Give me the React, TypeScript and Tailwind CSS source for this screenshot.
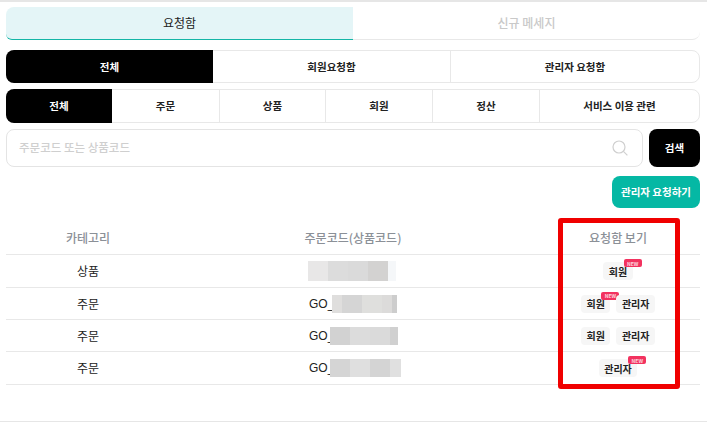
const font = { fontFamily: '"Noto Sans CJK KR", "Noto Sans", sans-serif' };

const typeTabs = ['전체', '회원요청함', '관리자 요청함'];
const categoryTabs = [
  { label: '전체', width: 'w-[106px]' },
  { label: '주문', width: 'w-[108px]' },
  { label: '상품', width: 'w-[106px]' },
  { label: '회원', width: 'w-[107px]' },
  { label: '정산', width: 'w-[107px]' },
  { label: '서비스 이용 관련', width: 'flex-1' },
];

// 블러 처리된 코드 영역
const rows = [
  {
    category: '상품',
    prefix: '',
    height: 'h-[33px]',
    blurBox: 'h-[20px] -ml-[1px]',
    blur: ['#e8e7e7', '#dcdcdc', '#dadada', '#d3d2d1', '#f5f7f9'],
    widths: ['w-[20px]', 'w-[20px]', 'w-[20px]', 'w-[20px]', 'w-[8px]'],
    tags: [{ label: '회원', isNew: true }],
  },
  {
    category: '주문',
    prefix: 'GO_',
    height: 'h-[32px]',
    blurBox: 'h-[18px] -ml-[2px]',
    blur: ['#dfdedd', '#d5d5d5', '#dfdfdd', '#dcdbda', '#cdcdcd'],
    widths: ['w-[10px]', 'w-[20px]', 'w-[20px]', 'w-[10px]', 'w-[5px]'],
    tags: [{ label: '회원', isNew: true }, { label: '관리자' }],
  },
  {
    category: '주문',
    prefix: 'GO_',
    height: 'h-[32px]',
    blurBox: 'h-[18px] -ml-[4px]',
    blur: ['#d2d2d2', '#dcdcdc', '#dadada', '#d0d0d0'],
    widths: ['w-[20px]', 'w-[20px]', 'w-[20px]', 'w-[8px]'],
    tags: [{ label: '회원' }, { label: '관리자' }],
  },
  {
    category: '주문',
    prefix: 'GO_',
    height: 'h-[33px]',
    blurBox: 'h-[18px] -ml-[4px]',
    blur: ['#d5d5d5', '#dfdfdf', '#d4d4d4', '#e0e0e0'],
    widths: ['w-[20px]', 'w-[20px]', 'w-[20px]', 'w-[11px]'],
    tags: [{ label: '관리자', isNew: true }],
  },
];

const Tag = ({ label, isNew }: { label: string; isNew?: boolean }) => (
  <span className="relative flex h-[18px] items-center rounded-[4px] bg-[#f6f6f6] px-[5.5px] text-[10px] font-bold text-[#222]">
    {label}
    {isNew && (
      <span className="absolute -right-[9px] -top-[3px] flex h-[8px] w-[18px] items-center justify-center rounded-[2px] bg-[#f2325f] text-[5px] leading-none text-white/80">
        NEW
      </span>
    )}
  </span>
);

export default function App() {
  return (
    <div style={font} className="relative h-[432px] w-[707px] overflow-hidden border-t-2 border-[#e6e6e6] bg-white">
      <div className="pl-[6px] pr-[7px] pt-[5px]">
        {/* 상단 탭 */}
        <div className="flex h-[33px] text-[12px]">
          <div className="flex flex-1 items-center justify-center rounded-tl-[8px] rounded-bl-[6px] border-b border-[#14b5a6] bg-[#e4f5f7] text-[#222]">
            요청함
          </div>
          <div className="flex flex-1 items-center justify-center rounded-br-[8px] border-b border-[#e8e8e8] font-medium text-[#c9c9c9]">
            신규 메세지
          </div>
        </div>

        {/* 요청함 구분 */}
        <div className="mt-[10px] flex h-[33px] rounded-[8px] border border-[#e8e8e8] text-[10.5px] font-bold text-[#222]">
          {typeTabs.map((tab, i) => (
            <div
              key={tab}
              className={
                i === 0
                  ? '-my-px -ml-px flex w-[207px] items-center justify-center rounded-l-[8px] bg-black text-white'
                  : i === 1
                    ? 'flex w-[238px] items-center justify-center border-r border-[#e8e8e8]'
                    : 'flex flex-1 items-center justify-center'
              }
            >
              {tab}
            </div>
          ))}
        </div>

        {/* 카테고리 */}
        <div className="mt-[6px] flex h-[34px] rounded-[8px] border border-[#e8e8e8] text-[10.5px] font-bold text-[#222]">
          {categoryTabs.map((tab, i) => (
            <div
              key={tab.label}
              className={`flex items-center justify-center ${tab.width} ${
                i === 0
                  ? '-my-px -ml-px rounded-l-[8px] bg-black text-white'
                  : i === 5
                    ? ''
                    : 'border-r border-[#e8e8e8]'
              }`}
            >
              {tab.label}
            </div>
          ))}
        </div>

        {/* 검색 */}
        <div className="mt-[6px] flex h-[38px] gap-[6px]">
          <div className="flex flex-1 items-center justify-between rounded-[8px] border border-[#e4e4e4] pl-[12px] pr-[14px]">
            <span className="text-[11.5px] font-medium text-[#cfcfcf]">주문코드 또는 상품코드</span>
            <svg width="16" height="16" viewBox="0 0 16 16" fill="none" stroke="#cfcfcf" strokeWidth="1.2">
              <circle cx="7" cy="7" r="6" />
              <path d="M11.4 11.4 15.4 15.4" />
            </svg>
          </div>
          <button className="flex w-[51px] items-center justify-center rounded-[8px] bg-black text-[10.5px] font-bold text-white">
            검색
          </button>
        </div>

        <div className="mt-[9px] flex justify-end">
          <button className="flex h-[32px] w-[88px] items-center justify-center rounded-[8px] bg-[#05b8a4] text-[10.5px] font-bold text-white">
            관리자 요청하기
          </button>
        </div>

        {/* 목록 */}
        <div className="mt-[14px]">
          <div className="grid h-[33px] grid-cols-[164px_366px_164px] items-center border-b border-[#e8e8e8] text-center text-[12px] font-medium text-[#8b9097]">
            <div>카테고리</div>
            <div>주문코드(상품코드)</div>
            <div>요청함 보기</div>
          </div>
          {rows.map((row, i) => (
            <div
              key={i}
              className={`grid grid-cols-[164px_366px_164px] items-center border-b border-[#e8e8e8] text-[12px] text-[#222] ${row.height}`}
            >
              <div className="text-center">{row.category}</div>
              <div className="flex items-center pl-[139px] font-['Liberation_Sans']">
                {row.prefix && <span>{row.prefix}</span>}
                <div className={`flex ${row.blurBox}`}>
                  {row.blur.map((color, j) => (
                    <div key={j} style={{ backgroundColor: color }} className={row.widths[j]} />
                  ))}
                </div>
              </div>
              <div className="flex justify-center gap-[6px]">
                {row.tags.map((tag) => (
                  <Tag key={tag.label} label={tag.label} isNew={tag.isNew} />
                ))}
              </div>
            </div>
          ))}
        </div>
      </div>

      {/* 하단 구분선 */}
      <div className="absolute inset-x-0 top-[419px] h-px bg-[#e6e6e6]" />

      {/* 강조 표시 */}
      <div className="absolute left-[558px] top-[216px] h-[171px] w-[122px] rounded-[3px] border-[5px] border-[#f00000]" />
    </div>
  );
}
